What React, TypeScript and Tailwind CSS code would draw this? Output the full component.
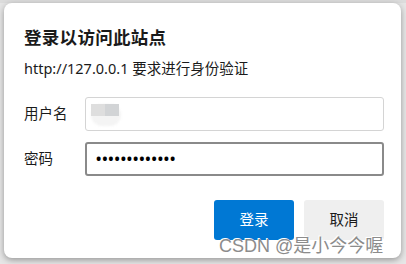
export default function App() {
  return (
    <div
      className="relative w-[406px] h-[264px] overflow-hidden bg-[#e6e6e6]"
      style={{ fontFamily: '"Noto Sans", "Noto Sans CJK SC", sans-serif' }}
    >
      <div className="absolute left-0 top-0 w-full h-[3px] bg-[#dcdcdc]" />
      {/* dialog */}
      <div className="relative ml-[4px] mt-[3px] w-[397px] h-[255px] bg-white rounded-[8px] shadow-[0_2px_6px_rgba(0,0,0,0.35)] pl-[20px] pr-[17px] pt-[21px]">
        <div className="text-[17.5px] leading-[26px] font-bold text-[#1a1a1a] tracking-[0.3px]">登录以访问此站点</div>
        <div className="mt-[8px] text-[14.5px] leading-[20px] text-[#1a1a1a]">http://127.0.0.1 要求进行身份验证</div>

        <div className="mt-[19px] flex items-center h-[34px]">
          <div className="w-[61px] text-[14.5px] text-[#1a1a1a]">用户名</div>
          <div className="relative flex-1 h-[34px] rounded-[3px] border border-[#d4d4d4] bg-white">
            <div className="absolute left-[5px] top-[6px] w-[30px] h-[22px] rounded-full bg-[#f4f4f4] blur-[1px]" />
            <div className="absolute left-[5px] top-[6px] flex">
              <div className="w-[14px] h-[12px] bg-[#dedede]" />
              <div className="w-[14px] h-[12px] bg-[#d2d4d6]" />
            </div>
          </div>
        </div>

        <div className="mt-[11px] flex items-center h-[34px]">
          <div className="w-[61px] text-[14.5px] text-[#1a1a1a]">密码</div>
          <div className="flex-1 h-[34px] rounded-[3px] border-2 border-[#8a8a8a] bg-white flex items-center pl-[9px]">
            <span className="text-[14px] leading-none tracking-[0.9px] font-bold text-black">•••••••••••••</span>
          </div>
        </div>

        <div className="mt-[24px] flex justify-end gap-[10px]">
          <button className="w-[80px] h-[40px] rounded-[3px] bg-[#0078d4] text-white text-[14.5px]">登录</button>
          <button className="w-[80px] h-[40px] rounded-[3px] bg-[#efefef] text-[#1a1a1a] text-[14.5px]">取消</button>
        </div>
      </div>

      {/* watermark */}
      <div
        className="absolute left-[219px] top-[235px] text-[18px] leading-[22px] text-[#8c8c8c] [text-shadow:1px_1px_0_#ffffff,-1px_-1px_0_#ffffff]"
        style={{ fontFamily: '"Liberation Sans", "Noto Sans CJK SC", sans-serif' }}
      >
        CSDN @是小今今喔
      </div>
    </div>
  );
}
